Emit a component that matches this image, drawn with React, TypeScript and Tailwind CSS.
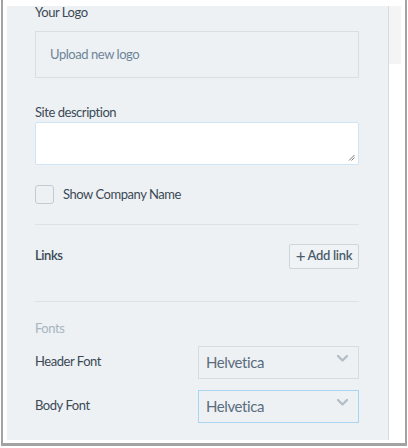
import React from 'react';

const Chevron: React.FC = () => (
  <svg width="11" height="7" viewBox="0 0 11 7" fill="none">
    <polyline points="1,1 5.5,5.5 10,1" stroke="#b3bec7" strokeWidth="2.4" strokeLinecap="round" strokeLinejoin="round" />
  </svg>
);

const FontSelect: React.FC<{ active?: boolean }> = ({ active }) => (
  <div
    className={`flex h-[33px] w-[161px] items-center justify-between border pl-[7px] pr-[10px] ${
      active ? 'border-[#a9d4f2]' : 'border-[#d6dce1]'
    }`}
  >
    <span className="text-[15px] leading-none tracking-[-0.4px] text-[#5b6d7d]">Helvetica</span>
    <span className="-mt-[8px]">
      <Chevron />
    </span>
  </div>
);

const App: React.FC = () => {
  return (
    <div className="h-[448px] w-[408px] bg-white" style={{ fontFamily: 'Lato, "Open Sans", sans-serif' }}>
      <div className="ml-[1px] flex h-[446px] w-[406px] border-b-[3px] border-l-[2px] border-r-[2px] border-[#a3a3a3] bg-white pl-[4px] pt-[6px]">
        {/* Panel */}
        <div className="h-[434px] w-[382px] border-r border-[#d5dce2] bg-[#edf1f4] pl-[28px] pr-[29px] text-[13px] tracking-[-0.45px] text-[#3c4955]">
          <div className="leading-[13px]">Your Logo</div>

          <div className="mt-[12px] flex h-[47px] items-center border border-[#d8dee3] pl-[14px] text-[#6d8598]">
            Upload new logo
          </div>

          <div className="mt-[26px] leading-[16px]">Site description</div>
          <div className="relative mt-[2px] h-[43px] rounded-[2px] border border-[#cde5f6] bg-white">
            <svg className="absolute bottom-[3px] right-[3px]" width="7" height="7" viewBox="0 0 7 7">
              <line x1="1" y1="6.5" x2="6.5" y2="1" stroke="#777" strokeWidth="1" />
              <line x1="3.5" y1="6.5" x2="6.5" y2="3.5" stroke="#777" strokeWidth="1" />
            </svg>
          </div>

          <div className="mt-[20px] flex items-center">
            <div className="h-[19px] w-[19px] rounded-[3px] border border-[#c3cbd2] bg-[#eef1f4]" />
            <span className="ml-[9px]">Show Company Name</span>
          </div>

          <div className="mt-[19px] h-px bg-[#dde2e7]" />

          <div className="mt-[19px] flex items-center justify-between">
            <span className="font-semibold">Links</span>
            <button className="flex h-[25px] w-[70px] items-center justify-center rounded-[2px] border border-[#cdd4da] bg-[#f0f3f5] font-semibold tracking-[-0.3px] text-[#4b5c6b]">
              <span className="mr-[2px] text-[17px] font-normal leading-none">+</span>Add link
            </button>
          </div>

          <div className="mt-[32px] h-px bg-[#dde2e7]" />

          <div className="mt-[18px] leading-[16px] text-[#a8b5bf]">Fonts</div>

          <div className="mt-[10px] flex items-center justify-between">
            <span>Header Font</span>
            <FontSelect />
          </div>
          <div className="mt-[11px] flex items-center justify-between">
            <span>Body Font</span>
            <FontSelect active />
          </div>
        </div>

        {/* Scrolled area to the right */}
        <div className="h-[58px] w-[12px] bg-[#f4f4f4]" />
      </div>
    </div>
  );
};

export default App;
